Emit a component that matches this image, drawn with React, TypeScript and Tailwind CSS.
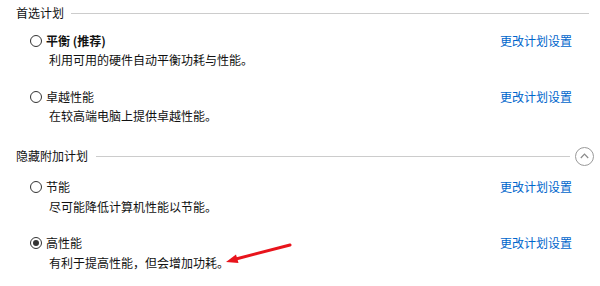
import type { ReactElement } from 'react';

type Plan = {
  id: string;
  title: string;
  desc: string;
  bold?: boolean;
  checked?: boolean;
};

const preferred: Plan[] = [
  { id: 'balanced', title: '平衡 (推荐)', desc: '利用可用的硬件自动平衡功耗与性能。', bold: true },
  { id: 'ultimate', title: '卓越性能', desc: '在较高端电脑上提供卓越性能。' },
];

const hidden: Plan[] = [
  { id: 'saver', title: '节能', desc: '尽可能降低计算机性能以节能。' },
  { id: 'high', title: '高性能', desc: '有利于提高性能，但会增加功耗。', checked: true },
];

function Radio({ checked }: { readonly checked?: boolean }): ReactElement {
  return (
    <span className="flex h-[12px] w-[12px] shrink-0 items-center justify-center rounded-full border border-[#333333] bg-white">
      {checked ? <span className="h-[6px] w-[6px] rounded-full bg-[#333333]" /> : null}
    </span>
  );
}

function PlanRow({
  plan,
  className,
  descGap,
}: {
  readonly plan: Plan;
  readonly className: string;
  readonly descGap: string;
}): ReactElement {
  return (
    <div className={`flex items-start pl-[30px] pr-[28px] ${className}`}>
      <div className="flex flex-1 flex-col">
        <div className="flex h-[16px] items-center gap-[4px]">
          <Radio checked={plan.checked} />
          <span className={plan.bold ? 'font-bold' : ''}>{plan.title}</span>
        </div>
        <p className={`h-[16px] pl-[19px] leading-[16px] ${descGap}`}>{plan.desc}</p>
      </div>
      <a className="h-[16px] leading-[16px] text-[#0066cc]" href="#">
        更改计划设置
      </a>
    </div>
  );
}

export default function App(): ReactElement {
  return (
    <div className="relative h-[286px] w-[600px] overflow-hidden bg-white text-[12px] leading-[16px] text-[#111111] [font-family:'Microsoft_YaHei','Noto_Sans_CJK_SC',sans-serif]">
      <div className="mt-[5px] flex h-[16px] items-center pl-[16px] pr-[11px]">
        <span>首选计划</span>
        <span className="ml-[7px] h-px flex-1 bg-[#cccccc]" />
      </div>
      <PlanRow plan={preferred[0]} className="mt-[12px]" descGap="mt-[3px]" />
      <PlanRow plan={preferred[1]} className="mt-[21px]" descGap="mt-[3px]" />

      <div className="mt-[24px] flex h-[16px] items-center pl-[16px] pr-[6px]">
        <span>隐藏附加计划</span>
        <span className="ml-[8px] h-px flex-1 bg-[#cccccc]" />
        <span className="ml-[5px] flex h-[19px] w-[19px] items-center justify-center rounded-full border border-[#9a9a9a]">
          <svg width="9" height="6" viewBox="0 0 9 6" fill="none">
            <path d="M0.8 5 L4.5 1.2 L8.2 5" stroke="#8a8a8a" strokeWidth="1.2" />
          </svg>
        </span>
      </div>
      <PlanRow plan={hidden[0]} className="mt-[15px]" descGap="mt-[4px]" />
      <PlanRow plan={hidden[1]} className="mt-[20px]" descGap="mt-[4px]" />

      <svg className="pointer-events-none absolute left-0 top-0" width="600" height="286" viewBox="0 0 600 286">
        <line x1="290" y1="245" x2="234" y2="259.5" stroke="#e8141c" strokeWidth="3" strokeLinecap="round" />
        <polygon points="226,262 236,254.5 238.5,263" fill="#e8141c" />
      </svg>
    </div>
  );
}
